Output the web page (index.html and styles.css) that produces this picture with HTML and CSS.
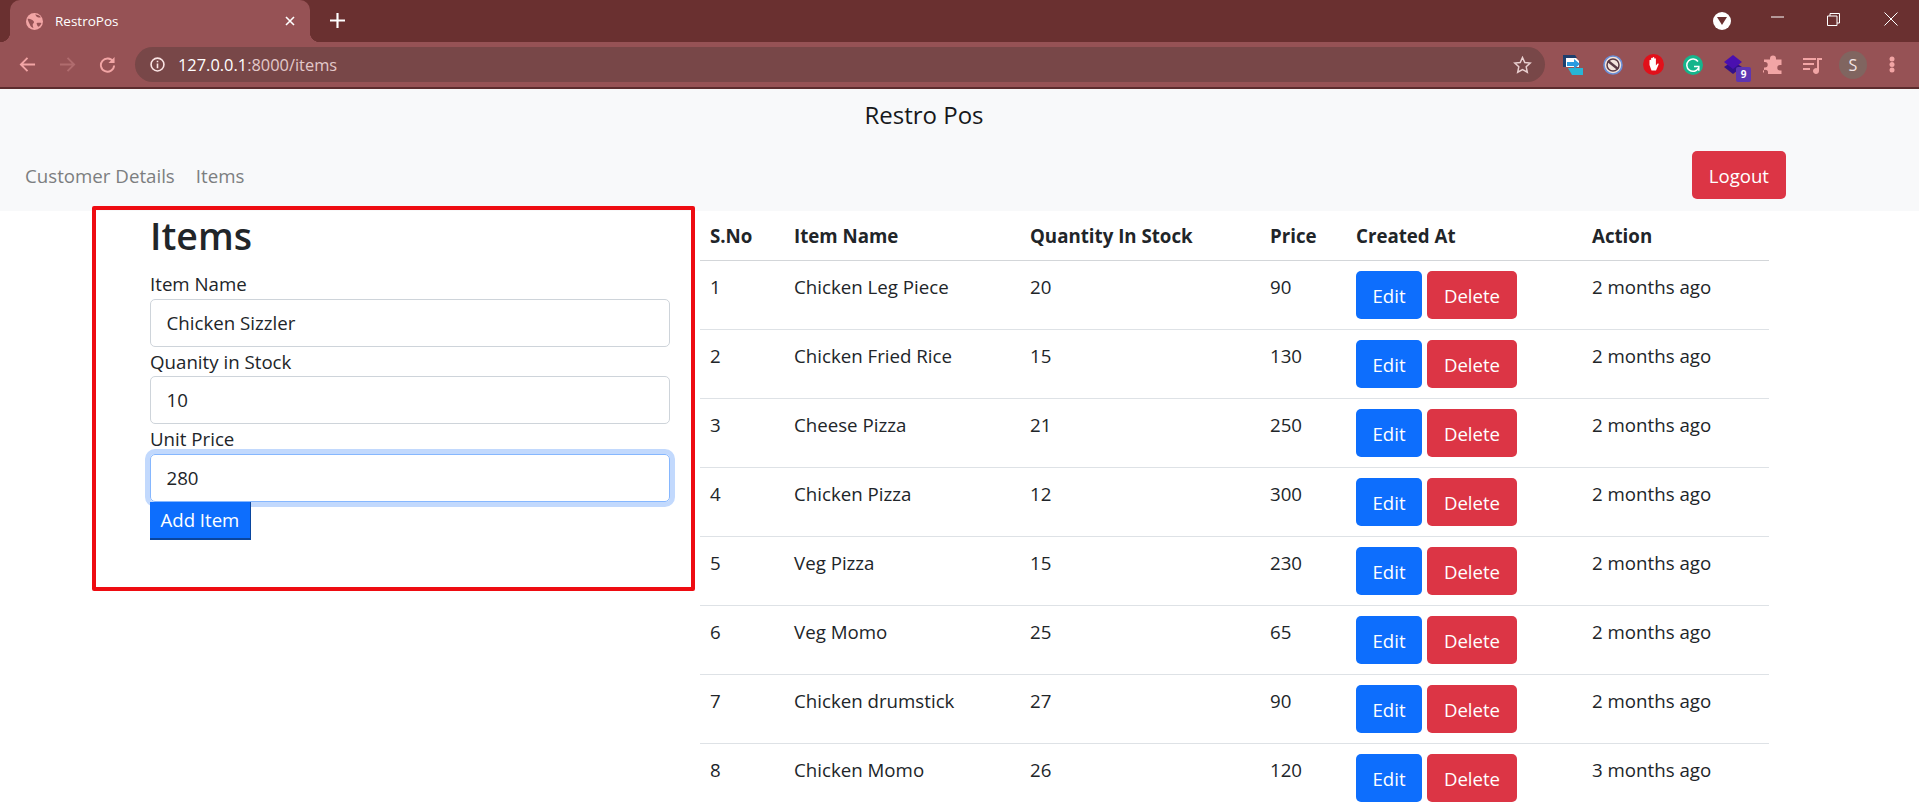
FILE: index.html
```html
<!DOCTYPE html>
<html lang="en">
<head>
  <meta charset="UTF-8">
  <title>RestroPos</title>
  <link rel="stylesheet" href="styles.css">
</head>
<body>

<div class="tabstrip">
  <div class="tab">
    <svg class="tab-icon" viewBox="0 0 16 16"><circle cx="8" cy="8" r="8" fill="#f2a5a5"/><path d="M1.500 5.500c2-.5 4 .5 5.500 2 1 1 .5 2-.5 2.500-.5 1 0 2.500.5 4-2-.5-3-2-3.500-3.500C3 9.500 2 8 1.500 5.500zM8.500 1.500c1 1 1 2 2.500 2.500 1 .3 2 .5 3 0-1-1.500-3-2.500-5.500-2.500zM10 9.500c1.500-.5 3-.5 4.500 0-.5 1.500-1.500 3-3 3.500-.8-1-1.500-2-1.500-3.500z" fill="#965255"/></svg>
    <span class="tab-title">RestroPos</span>
    <svg class="tab-close" viewBox="0 0 10 10"><path d="M1 1l8 8M9 1l-8 8" stroke="#fff" stroke-width="1.600"/></svg>
  </div>
  <svg class="new-tab" viewBox="0 0 14 14"><path d="M7 0v14M0 7h14" stroke="#fff" stroke-width="2"/></svg>
  <div class="window-controls">
    <span class="media-dot"><svg viewBox="0 0 10 8"><path d="M0 0h10L5 8z" fill="#6a3030"/></svg></span>
    <svg class="win-min" viewBox="0 0 13 2"><path d="M0 1h13" stroke="#fff"/></svg>
    <svg class="win-max" viewBox="0 0 13 13"><path d="M3 3V.5h9.500V10H10M.5 3h9.500v9.500H.5z" fill="none" stroke="#fff"/></svg>
    <svg class="win-close" viewBox="0 0 14 14"><path d="M.5.5l13 13M13.500.5l-13 13" stroke="#fff"/></svg>
  </div>
</div>

<div class="toolbar">
  <svg class="nav-icon" viewBox="0 0 18 18"><path d="M17 9H2M9 2L2 9l7 7" fill="none" stroke="#f2a5a5" stroke-width="2"/></svg>
  <svg class="nav-icon" viewBox="0 0 18 18"><path d="M1 9h15M9 2l7 7-7 7" fill="none" stroke="#b06c6e" stroke-width="2"/></svg>
  <svg class="nav-icon" viewBox="0 0 18 18"><path d="M15 6a7 7 0 1 0 1 4" fill="none" stroke="#f2a5a5" stroke-width="2"/><path d="M16.500 1v6.500H10z" fill="#f2a5a5"/></svg>
  <div class="omnibox">
    <svg class="info-icon" viewBox="0 0 14 14"><circle cx="7" cy="7" r="6" fill="none" stroke="#fbe4e4" stroke-width="1.500"/><path d="M7 6v4.500M7 3.500v1.500" stroke="#fbe4e4" stroke-width="1.500"/></svg>
    <span class="url-host">127.0.0.1</span><span class="url-rest">:8000/items</span>
    <svg class="star" viewBox="0 0 18 18"><path d="M9 1.500l2.300 5 5.400.6-4 3.700 1.100 5.400L9 13.500l-4.800 2.700 1.100-5.400-4-3.700 5.400-.6z" fill="none" stroke="#e9cfcf" stroke-width="1.500"/></svg>
  </div>
  <div class="extensions">
    <svg class="ext" viewBox="0 0 20 20"><path d="M0 0h12l2 3H3v9H0z" fill="#1d3f6e"/><path d="M3 3h10l3 3v6H3z" fill="#fff"/><path d="M5 13h15v7H9z" fill="#27b5d6"/><path d="M4 7h7V4l6 5-6 5v-3H4z" fill="#2a9be0"/></svg>
    <svg class="ext" viewBox="0 0 20 20"><circle cx="10" cy="10" r="9" fill="#f4e4dc" stroke="#6a8fd8" stroke-width="1.600"/><circle cx="10" cy="10" r="6" fill="none" stroke="#5a3a44" stroke-width="1.500"/><path d="M5 6l10 8" stroke="#5a3a44" stroke-width="2.500"/></svg>
    <svg class="ext ext-hand" viewBox="0 0 21 21"><circle cx="10.500" cy="10.500" r="10.500" fill="#e1101a"/><path d="M6.500 11V6.500a.8.800 0 0 1 1.600 0V10V4.500a.8.800 0 0 1 1.600 0V10V3.800a.8.800 0 0 1 1.600 0V10V5a.8.800 0 0 1 1.600 0v6.500l1.500-1.800c.8-.6 1.600.1 1.100 1L13 16.500H8.500z" fill="#fff"/></svg>
    <svg class="ext" viewBox="0 0 20 20"><circle cx="10" cy="10" r="10" fill="#15b58c"/><path d="M15 6.500a6.200 6.200 0 1 0 .5 6.500M11 11.500h4.800v4.300" fill="none" stroke="#fff" stroke-width="1.500"/></svg>
    <span class="ext-badged">
      <svg class="ext" viewBox="0 0 20 20"><path d="M1 12l9 7 9-7-9-6z" fill="#33108a"/><path d="M10 0l9 7-9 7-9-7z" fill="#4a0fb0"/></svg>
      <span class="badge">9</span>
    </span>
    <svg class="ext" viewBox="0 0 20 20"><path d="M7 3.500a3 3 0 0 1 6 0v1h5.500V10h-1.500a2.700 2.700 0 0 0 0 5.400h1.500V19H5v-1.500a2.700 2.700 0 0 0-5.400 0H1v-5h1a2.700 2.700 0 0 0 0-5.400H1V4.500h6z" fill="#f2a5a5"/></svg>
    <svg class="ext" viewBox="0 0 20 20"><path d="M0 3h13v2H0zM0 8h11v2H0zM0 13h7v2H0z" fill="#f2a5a5"/><path d="M14 3h5v2h-3v11a3 3 0 1 1-2-2.800z" fill="#f2a5a5"/></svg>
    <span class="avatar">S</span>
    <svg class="menu-dots" viewBox="0 0 6 17"><circle cx="3" cy="3" r="2.500" fill="#f2a5a5"/><circle cx="3" cy="8.500" r="2.500" fill="#f2a5a5"/><circle cx="3" cy="14" r="2.500" fill="#f2a5a5"/></svg>
  </div>
</div>
<div class="toolbar-edge"></div>

<nav class="navbar">
  <div class="brand">Restro Pos</div>
  <div class="nav-row">
    <a class="nav-link">Customer Details</a>
    <a class="nav-link">Items</a>
    <button class="btn btn-danger logout">Logout</button>
  </div>
</nav>

<main class="content">
  <div class="annotation"></div>

  <form class="item-form">
    <h1>Items</h1>
    <label>Item Name</label>
    <div class="input">Chicken Sizzler</div>
    <label>Quanity in Stock</label>
    <div class="input">10</div>
    <label>Unit Price</label>
    <div class="input focused">280</div>
    <button class="add-item" type="button">Add Item</button>
  </form>

  <table class="items-table">
    <thead>
      <tr>
        <th>S.No</th>
        <th>Item Name</th>
        <th>Quantity In Stock</th>
        <th>Price</th>
        <th>Created At</th>
        <th>Action</th>
      </tr>
    </thead>
    <tbody id="tbody">
      <tr><td>1</td><td>Chicken Leg Piece</td><td>20</td><td>90</td><td><button class="btn btn-primary">Edit</button> <button class="btn btn-danger">Delete</button></td><td>2 months ago</td></tr>
      <tr><td>2</td><td>Chicken Fried Rice</td><td>15</td><td>130</td><td><button class="btn btn-primary">Edit</button> <button class="btn btn-danger">Delete</button></td><td>2 months ago</td></tr>
      <tr><td>3</td><td>Cheese Pizza</td><td>21</td><td>250</td><td><button class="btn btn-primary">Edit</button> <button class="btn btn-danger">Delete</button></td><td>2 months ago</td></tr>
      <tr><td>4</td><td>Chicken Pizza</td><td>12</td><td>300</td><td><button class="btn btn-primary">Edit</button> <button class="btn btn-danger">Delete</button></td><td>2 months ago</td></tr>
      <tr><td>5</td><td>Veg Pizza</td><td>15</td><td>230</td><td><button class="btn btn-primary">Edit</button> <button class="btn btn-danger">Delete</button></td><td>2 months ago</td></tr>
      <tr><td>6</td><td>Veg Momo</td><td>25</td><td>65</td><td><button class="btn btn-primary">Edit</button> <button class="btn btn-danger">Delete</button></td><td>2 months ago</td></tr>
      <tr><td>7</td><td>Chicken drumstick</td><td>27</td><td>90</td><td><button class="btn btn-primary">Edit</button> <button class="btn btn-danger">Delete</button></td><td>2 months ago</td></tr>
      <tr><td>8</td><td>Chicken Momo</td><td>26</td><td>120</td><td><button class="btn btn-primary">Edit</button> <button class="btn btn-danger">Delete</button></td><td>3 months ago</td></tr>
    </tbody>
  </table>
</main>

</body>
</html>
```

FILE: styles.css
```css
html, body {
  height: 803px;
}

body {
  overflow: hidden;
  margin: 0px;
  font-size: 18.7px;
  font-family: 'Open Sans', sans-serif;
  color: #212529;
  background-color: #ffffff;
}

/* browser chrome */
.tabstrip {
  display: flex;
  align-items: flex-end;
  height: 42px;
  background-color: #6a3030;
  padding-left: 10px;
}

.tab {
  position: relative;
  display: flex;
  align-items: center;
  box-sizing: border-box;
  width: 300px;
  height: 42px;
  padding: 0px 15px 0px 16px;
  background-color: #965255;
  border-radius: 10px 10px 0px 0px;
}

/* small flares at the foot of the active tab */
.tab::before, .tab::after {
  content: "";
  position: absolute;
  bottom: 0px;
  width: 10px;
  height: 10px;
}
.tab::before {
  left: -10px;
  background: radial-gradient(circle at 0px 0px, #6a3030 10px, #965255 10.500px);
}
.tab::after {
  right: -10px;
  background: radial-gradient(circle at 10px 0px, #6a3030 10px, #965255 10.500px);
}

.tab-icon { width: 17px; height: 17px; }

.tab-title {
  margin-left: 12px;
  font-size: 13.500px;
  color: #ffffff;
  flex: 1;
}

.tab-close { width: 10px; height: 10px; }

.new-tab { width: 15px; height: 15px; margin: 0px 0px 14px 20px; }

.window-controls {
  display: flex;
  align-items: center;
  height: 42px;
  margin-left: auto;
}

.media-dot {
  display: flex;
  align-items: center;
  justify-content: center;
  width: 18px;
  height: 18px;
  border-radius: 50%;
  background-color: #ffffff;
}
.media-dot svg { width: 10px; height: 8px; }

.win-min { width: 13px; height: 2px; margin: -8px 0px 0px 40px; }
.win-max { width: 13px; height: 13px; margin: -4px 0px 0px 43px; }
.win-close { width: 14px; height: 14px; margin: -5px 21px 0px 44px; }

.toolbar {
  display: flex;
  align-items: center;
  box-sizing: border-box;
  height: 45px;
  padding-left: 19px;
  background-color: #965255;
}

.nav-icon { width: 17px; height: 17px; margin-right: 23px; flex-shrink: 0; }

.omnibox {
  display: flex;
  align-items: center;
  box-sizing: border-box;
  width: 1410px;
  height: 35px;
  margin-left: -4px;
  padding: 0px 13px 0px 15px;
  border-radius: 18px;
  background-color: #784748;
  font-size: 16.400px;
}

.info-icon { width: 15px; height: 15px; margin-right: 13px; }
.url-host { color: #ffffff; }
.url-rest { color: #e3c9ca; }
.star { width: 19px; height: 18px; margin-left: auto; }

.extensions {
  display: flex;
  align-items: center;
  margin-left: 18px;
}

.ext { display: block; width: 20px; height: 20px; margin-right: 20px; }
.ext-hand { width: 21px; height: 21px; margin-right: 19px; }
.ext-badged { position: relative; display: block; }

.badge {
  position: absolute;
  left: 13px;
  top: 12px;
  width: 15px;
  height: 15px;
  border-radius: 2px;
  background-color: #5e35b1;
  color: #ffffff;
  font-size: 10px;
  font-weight: 700;
  line-height: 15px;
  text-align: center;
}

.avatar {
  width: 28px;
  height: 28px;
  margin-left: -4px;
  border-radius: 50%;
  background-color: #806560;
  color: #f4e6e6;
  font-size: 16px;
  line-height: 28px;
  text-align: center;
}

.menu-dots { width: 6px; height: 17px; margin-left: 22px; }

.toolbar-edge {
  height: 2px;
  background-color: #5c2c2e;
}

/* navbar */
.navbar {
  box-sizing: border-box;
  height: 122px;
  background-color: #f8f9fa;
}

.brand {
  padding: 11px 71px 0px 0px;
  font-size: 24px;
  line-height: 30px;
  text-align: center;
  color: #16181b;
}

.nav-row {
  display: flex;
  align-items: center;
  padding: 21px 0px 0px 25px;
}

.nav-link {
  margin-right: 21px;
  color: #7c7e80;
}

.logout {
  margin-left: auto;
  margin-right: 133px;
  padding: 0px 17.500px;
  font-size: 19px;
}

/* buttons */
.btn {
  box-sizing: border-box;
  height: 48px;
  padding: 1px 17px 0px;
  border: 0px;
  border-radius: 5px;
  font-size: 18.600px;
  font-family: 'Open Sans', sans-serif;
  color: #ffffff;
}

.btn-primary { background-color: #0d6efd; padding: 1px 16.500px 0px; }
.btn-danger { background-color: #dc3545; }

/* page */
.content {
  position: relative;
  display: flex;
  align-items: flex-start;
  padding-left: 150px;
}

/* red box drawn over the screenshot */
.annotation {
  position: absolute;
  left: 92px;
  top: -5px;
  width: 595px;
  height: 377px;
  border: 4px solid #ee0c12;
  border-radius: 2px;
}

.item-form {
  width: 520px;
  flex-shrink: 0;
  margin-right: 30px;
}

h1 {
  margin: 2px 0px 10px;
  font-size: 37.500px;
  font-weight: 600;
  line-height: 46px;
}

label {
  display: block;
  line-height: 29.500px;
  height: 29.500px;
}

.input {
  box-sizing: border-box;
  height: 48px;
  padding: 0px 15.500px;
  border: 1px solid #ced4da;
  border-radius: 5px;
  line-height: 46px;
  color: #212529;
}

.input.focused {
  border-color: #86b7fe;
  box-shadow: 0px 0px 0px 5px #c2d9fd;
}

.add-item {
  display: block;
  height: 38px;
  padding: 0px 10.500px;
  border: 0px;
  border-bottom: 2px solid #0a469f;
  border-right: 1px solid #0a469f;
  background-color: #0d6efd;
  color: #ffffff;
  font-size: 18.600px;
  font-family: 'Open Sans', sans-serif;
}

.items-table {
  width: 1069px;
  border-collapse: collapse;
  table-layout: fixed;
}

th, td {
  height: 69px;
  box-sizing: border-box;
  padding: 13px 10px 10px;
  border-bottom: 1px solid #dee2e6;
  text-align: left;
  vertical-align: top;
}

th {
  height: 49px;
  padding: 12px 10px 0px;
  font-weight: 700;
  border-bottom-color: #d3d6d9;
}

td:nth-child(5) { padding-top: 10px; }

th:nth-child(1) { width: 84px; }
th:nth-child(2) { width: 236px; }
th:nth-child(3) { width: 240px; }
th:nth-child(4) { width: 86px; }
th:nth-child(5) { width: 236px; }
```
